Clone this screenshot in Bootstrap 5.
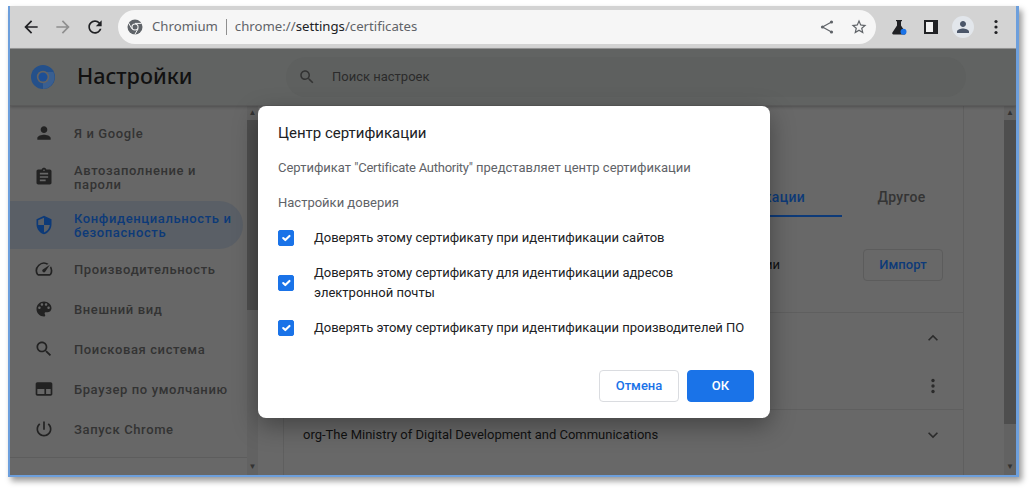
<!DOCTYPE html>
<html lang="ru">
<head>
<meta charset="utf-8">
<title>Настройки</title>
<link href="https://cdn.jsdelivr.net/npm/bootstrap@5.3.0/dist/css/bootstrap.min.css" rel="stylesheet">
<style>
html,body{height:100%;margin:0;background:#fff;overflow:hidden;font-family:Roboto,sans-serif;font-size:13px}
.shot-win{position:relative;margin:6px 0 0 8px;width:1011px;height:471px;border-left:2px solid #6d9fdc;border-right:3px solid #6d9fdc;border-bottom:2px solid #6d9fdc;box-shadow:3px 4px 6px rgba(0,0,0,.4);overflow:hidden;background:#686868}
.tool-bar{height:43px;background:#d3d3d3;border-bottom:1px solid #9a9a9a;padding:0 0 0 5px}
.tool-btn{width:32px;height:32px;flex:none}
.tool-btn svg{width:20px;height:20px}
.tool-last{margin-left:1px}
.omni-box{width:758px;height:34px;margin:0 7px 0 7px;background:#f6f6f6;border-radius:17px;padding:0 8px 0 9px;font-family:"Noto Sans",sans-serif;font-size:13.2px;color:#5f6368;flex:none;white-space:nowrap}
.omni-logo{margin-right:9px;flex:none}
.omni-sep{width:1px;height:16px;background:#8f8f8f;margin:0 8px}
.omni-host{color:#202124}
.omni-share{margin-right:3px}
.ava-tar{width:22px;height:22px;border-radius:50%;background:#e2e6eb}
.tool-btn .ava-tar svg{width:18px;height:18px}
.set-head{height:57px;background:#616362;border-bottom:1px solid #5a5a5a;box-shadow:0 1px 3px rgba(0,0,0,.25);position:relative;z-index:1}
.set-title{width:247px;padding-left:21px;font-family:"Noto Sans",sans-serif;font-size:21.6px;line-height:28px;font-weight:500;color:#111;flex:none;gap:22px}
.set-title span{margin-top:-2px}
.set-search{width:680px;height:40px;margin-left:29px;border-radius:20px;background:#5e605f;padding-left:12px;color:#2b2b2b;font-size:13px;gap:16px}
.set-body{height:370px}
.side-nav{width:237px;flex:none;padding-top:7px;background:#676767;height:352px;border-bottom:1px solid #5d5d5d}
.side-row{height:40px;color:#333;font-weight:500;font-size:13px;line-height:14px;padding-left:24px;gap:20px;letter-spacing:.62px}
.side-row span{padding-top:2px}
.side-row svg{width:20px;height:20px;fill:#222;flex:none}
.side-tall{height:48px}
.side-on{background:#5a5f66;border-radius:0 24px 24px 0;color:#0d3a78;width:233px}
.side-on svg{fill:#0d3a78}
.bar-y{width:12px;flex:none;background:#626262}
.bar-thin{width:11px}
.bar-cap{height:14px;color:#333;font-size:8px;line-height:14px;text-align:center}
.bar-cap-low{height:16px}
.bar-gap{flex:1 1 auto}
.bar-thumb{background:#4e4e4e}
.sc-left{height:190px}
.sc-right{height:304px}
.main-pane{flex:1 1 auto;padding:0 40px 0 25px;min-width:0}
.cert-card{height:100%;border-left:1px solid #5f5f5f;border-right:1px solid #5f5f5f}
.tab-bar{height:111px;padding-top:72px}
.tab-item{font-weight:500;text-align:center;height:39px;padding:10px 2px 0 0;color:#343434;font-size:14px;line-height:18px;width:121px;letter-spacing:.3px}
.tab-on{width:204px;color:#0d3a78;border-bottom:2px solid #0d3a78;text-align:right;padding-right:37px}
.imp-row{height:96px;border-bottom:1px solid #5f5f5f;padding:0 20px 0 19px;color:#111}
.imp-text{flex:1 1 auto;text-align:right;padding-right:83px}
.imp-btn{width:80px;height:32px;padding:0;border:1px solid #5c5c5c;border-radius:4px;background:transparent;color:#0d3a78;font-weight:500;font-size:13px;letter-spacing:.1px}
.org-row{padding:0 20px 0 19px;color:#111}
.org-a{height:49px}.org-b{height:48px;border-bottom:1px solid #5f5f5f}.org-c{height:49px;padding-top:1px}
.org-row svg{width:20px;height:20px;fill:#2b2b2b}
.dlg-box{position:absolute;left:248px;top:100px;width:512px;height:312px;background:#fff;border-radius:8px;box-shadow:0 8px 24px rgba(0,0,0,.35);padding:20px 16px 16px 20px;z-index:5;color:#202124}
.dlg-title{font-size:15px;line-height:14px;margin:0 0 20px;font-weight:400}
.dlg-note{color:#5f6368;line-height:15px;margin:0 0 20px}
.dlg-tight{letter-spacing:-.25px}
.dlg-check{gap:20px;line-height:20px;margin:0}
.dlg-check .form-check-input{width:16px;height:16px;margin:0;flex:none;background-color:#1a73e8;border-color:#1a73e8;border-radius:2px}
.dlg-list{gap:15px;margin-top:-2px}
.dlg-foot{position:absolute;right:16px;bottom:16px;gap:8px}
.dlg-cancel{width:80px;height:32px;padding:0;font-size:13px;font-weight:500;border:1px solid #dadce0;color:#1a73e8;background:#fff;border-radius:4px}
.dlg-ok{width:67px;height:32px;padding:0;font-size:13px;font-weight:500;background:#1a73e8;border:1px solid #1a73e8;color:#fff;border-radius:4px}
</style>
</head>
<body>
<div class="shot-win">
  <div class="tool-bar d-flex align-items-center">
    <div class="tool-btn d-flex align-items-center justify-content-center"><svg viewBox="0 0 24 24" fill="#202124"><path d="M20 11H7.83l5.59-5.59L12 4l-8 8 8 8 1.41-1.41L7.83 13H20v-2z"/></svg></div>
    <div class="tool-btn d-flex align-items-center justify-content-center"><svg viewBox="0 0 24 24" fill="#8f8f8f"><path d="M12 4l-1.41 1.41L16.17 11H4v2h12.17l-5.58 5.59L12 20l8-8z"/></svg></div>
    <div class="tool-btn d-flex align-items-center justify-content-center"><svg viewBox="0 0 24 24" fill="#202124"><path d="M17.65 6.35C16.2 4.9 14.21 4 12 4c-4.42 0-7.99 3.58-7.99 8s3.57 8 7.99 8c3.73 0 6.84-2.55 7.73-6h-2.08c-.82 2.33-3.04 4-5.65 4-3.31 0-6-2.69-6-6s2.69-6 6-6c1.66 0 3.14.69 4.22 1.78L13 11h7V4l-2.35 2.35z"/></svg></div>
    <div class="omni-box d-flex align-items-center">
      <svg width="16" height="16" viewBox="0 0 16 16" class="omni-logo"><circle cx="8" cy="8" r="7.5" fill="#5f6368"/><circle cx="8" cy="8" r="3.6" fill="#f6f6f6"/><circle cx="8" cy="8" r="2.5" fill="#5f6368"/><path d="M8 4.4h6.6M4.9 9.8L1.6 4M11.1 9.8l-3.3 5.7" stroke="#f6f6f6" stroke-width="1"/></svg>
      <span>Chromium</span><span class="omni-sep"></span><span>chrome://<span class="omni-host">settings</span>/certificates</span>
      <span class="ms-auto d-flex align-items-center gap-3">
        <svg class="omni-share" width="14" height="16" viewBox="0 0 14 16" fill="#5f6368"><path d="M11.5 3L2.500 8l9 5" fill="none" stroke="#5f6368" stroke-width="1.200"/><circle cx="11.500" cy="3" r="1.600"/><circle cx="2.500" cy="8" r="1.600"/><circle cx="11.500" cy="13" r="1.600"/></svg>
        <svg width="18" height="18" viewBox="0 0 24 24" fill="#5f6368"><path d="M22 9.24l-7.19-.62L12 2 9.19 8.63 2 9.24l5.46 4.73L5.82 21 12 17.27 18.18 21l-1.63-7.03L22 9.24zM12 15.4l-3.76 2.27 1-4.28-3.32-2.88 4.38-.38L12 6.1l1.71 4.04 4.38.38-3.32 2.88 1 4.28L12 15.4z"/></svg>
      </span>
    </div>
    <div class="tool-btn d-flex align-items-center justify-content-center"><svg viewBox="0 0 20 20"><path d="M7 3h6v1.2h-1v4.2l4.6 7.2c.5.8 0 1.9-1 1.9H4.4c-1 0-1.500-1.100-1-1.900L8 8.400V4.200H7z" fill="#202124"/><circle cx="14.500" cy="14.800" r="3" fill="#1a73e8"/></svg></div>
    <div class="tool-btn d-flex align-items-center justify-content-center"><svg viewBox="0 0 20 20"><rect x="3" y="3" width="14" height="14" fill="#202124"/><rect x="5" y="5" width="7" height="10" fill="#f1f1f1"/></svg></div>
    <div class="tool-btn d-flex align-items-center justify-content-center"><div class="ava-tar d-flex align-items-center justify-content-center"><svg viewBox="0 0 24 24" fill="#4b5669"><path d="M12 12c2.210 0 4-1.790 4-4s-1.790-4-4-4-4 1.790-4 4 1.790 4 4 4zm0 2c-2.670 0-8 1.340-8 4v2h16v-2c0-2.660-5.330-4-8-4z"/></svg></div></div>
    <div class="tool-btn tool-last d-flex align-items-center justify-content-center"><svg viewBox="0 0 20 20" fill="#202124"><circle cx="10" cy="4.500" r="1.600"/><circle cx="10" cy="10" r="1.600"/><circle cx="10" cy="15.500" r="1.600"/></svg></div>
  </div>

  <div class="set-head d-flex align-items-center">
    <div class="set-title d-flex align-items-center">
      <svg width="24" height="24" viewBox="0 0 24 24" class="flex-none"><circle cx="12" cy="12" r="12" fill="#24508a"/><path d="M12 7h10.400A12 12 0 0 1 12 24z" fill="#3a5f90"/><circle cx="12" cy="12" r="6.200" fill="#636363"/><circle cx="12" cy="12" r="4.500" fill="#1d4f96"/></svg>
      <span>Настройки</span>
    </div>
    <div class="set-search d-flex align-items-center">
      <svg width="18" height="18" viewBox="0 0 24 24" fill="#333"><path d="M15.500 14h-.790l-.280-.270C15.410 12.590 16 11.110 16 9.500 16 5.910 13.090 3 9.500 3S3 5.910 3 9.500 5.910 16 9.500 16c1.610 0 3.090-.590 4.230-1.570l.270.280v.790l5 4.990L20.490 19l-4.990-5zm-6 0C7.010 14 5 11.990 5 9.500S7.010 5 9.500 5 14 7.010 14 9.500 11.990 14 9.500 14z"/></svg>
      <span>Поиск настроек</span>
    </div>
  </div>

  <div class="set-body d-flex">
    <nav class="side-nav">
      <div class="side-row d-flex align-items-center"><svg viewBox="0 0 24 24"><path d="M12 12c2.210 0 4-1.790 4-4s-1.790-4-4-4-4 1.790-4 4 1.790 4 4 4zm0 2c-2.670 0-8 1.340-8 4v2h16v-2c0-2.660-5.330-4-8-4z"/></svg><span>Я и Google</span></div>
      <div class="side-row side-tall d-flex align-items-center"><svg viewBox="0 0 24 24"><path d="M19 3h-4.180C14.400 1.840 13.300 1 12 1c-1.300 0-2.400.84-2.820 2H5c-1.100 0-2 .9-2 2v14c0 1.100.9 2 2 2h14c1.100 0 2-.9 2-2V5c0-1.100-.9-2-2-2zm-7 0c.55 0 1 .45 1 1s-.45 1-1 1-1-.45-1-1 .45-1 1-1zm2 14H7v-2h7v2zm3-4H7v-2h10v2zm0-4H7V7h10v2z"/></svg><span>Автозаполнение и<br>пароли</span></div>
      <div class="side-row side-tall side-on d-flex align-items-center"><svg viewBox="0 0 24 24"><path d="M12 1L3 5v6c0 5.550 3.840 10.740 9 12 5.160-1.260 9-6.450 9-12V5l-9-4zm0 10.990h7c-.53 4.120-3.280 7.790-7 8.940V12H5V6.300l7-3.110v8.800z"/></svg><span>Конфиденциальность и<br>безопасность</span></div>
      <div class="side-row d-flex align-items-center"><svg viewBox="0 0 24 24"><path d="M20.380 8.570l-1.230 1.850a8 8 0 0 1-.22 7.580H5.070A8 8 0 0 1 15.580 6.850l1.850-1.230A10 10 0 0 0 3.350 19a2 2 0 0 0 1.720 1h13.850a2 2 0 0 0 1.740-1 10 10 0 0 0-.27-10.440zm-9.790 6.840a2 2 0 0 0 2.830 0l5.660-8.490-8.490 5.660a2 2 0 0 0 0 2.830z"/></svg><span>Производительность</span></div>
      <div class="side-row d-flex align-items-center"><svg viewBox="0 0 24 24"><path d="M12 3c-4.970 0-9 4.030-9 9s4.030 9 9 9c.83 0 1.500-.67 1.500-1.500 0-.39-.15-.74-.39-1.010-.23-.26-.38-.61-.38-.99 0-.83.67-1.500 1.500-1.500H16c2.760 0 5-2.240 5-5 0-4.420-4.030-8-9-8zm-5.500 9c-.83 0-1.500-.67-1.500-1.500S5.670 9 6.500 9 8 9.670 8 10.500 7.330 12 6.500 12zm3-4C8.670 8 8 7.330 8 6.500S8.670 5 9.500 5s1.500.67 1.500 1.500S10.330 8 9.500 8zm5 0c-.83 0-1.500-.67-1.500-1.500S13.670 5 14.500 5s1.500.67 1.500 1.500S15.330 8 14.500 8zm3 4c-.83 0-1.500-.67-1.500-1.500S16.670 9 17.500 9s1.500.67 1.500 1.500-.67 1.500-1.500 1.500z"/></svg><span>Внешний вид</span></div>
      <div class="side-row d-flex align-items-center"><svg viewBox="0 0 24 24"><path d="M15.500 14h-.790l-.280-.270C15.410 12.590 16 11.110 16 9.500 16 5.910 13.090 3 9.500 3S3 5.910 3 9.500 5.910 16 9.500 16c1.610 0 3.090-.590 4.230-1.570l.270.280v.790l5 4.990L20.490 19l-4.990-5zm-6 0C7.010 14 5 11.990 5 9.500S7.010 5 9.500 5 14 7.010 14 9.500 11.990 14 9.500 14z"/></svg><span>Поисковая система</span></div>
      <div class="side-row d-flex align-items-center"><svg viewBox="0 0 24 24"><path d="M20 4H4c-1.100 0-2 .9-2 2v12c0 1.100.9 2 2 2h16c1.100 0 2-.9 2-2V6c0-1.100-.9-2-2-2zm0 14h-5.500v-6H20v6zm-7.500 0H4v-6h8.500v6z"/></svg><span>Браузер по умолчанию</span></div>
      <div class="side-row d-flex align-items-center"><svg viewBox="0 0 24 24"><path d="M13 3h-2v10h2V3zm4.830 2.170l-1.420 1.420C17.990 7.860 19 9.810 19 12c0 3.870-3.130 7-7 7s-7-3.130-7-7c0-2.190 1.010-4.140 2.580-5.420L6.170 5.170C4.230 6.820 3 9.260 3 12c0 4.970 4.030 9 9 9s9-4.030 9-9c0-2.740-1.230-5.180-3.170-6.830z"/></svg><span>Запуск Chrome</span></div>
    </nav>
    <div class="bar-y bar-thin d-flex flex-column">
      <div class="bar-cap">▲</div><div class="bar-thumb sc-left"></div><div class="bar-gap"></div><div class="bar-cap bar-cap-low">▼</div>
    </div>
    <main class="main-pane">
      <div class="cert-card">
        <div class="tab-bar d-flex justify-content-end">
          <div class="tab-item tab-on">сертификации</div>
          <div class="tab-item">Другое</div>
        </div>
        <div class="imp-row d-flex align-items-center">
          <div class="imp-text">сертификации</div>
          <button type="button" class="btn imp-btn">Импорт</button>
        </div>
        <div class="org-row org-a d-flex align-items-center justify-content-end"><svg viewBox="0 0 24 24"><path d="M12 8l-6 6 1.410 1.410L12 10.830l4.590 4.580L18 14z"/></svg></div>
        <div class="org-row org-b d-flex align-items-center justify-content-end"><svg viewBox="0 0 20 20"><circle cx="10" cy="4.500" r="1.700"/><circle cx="10" cy="10" r="1.700"/><circle cx="10" cy="15.500" r="1.700"/></svg></div>
        <div class="org-row org-c d-flex align-items-center justify-content-between"><span>org-The Ministry of Digital Development and Communications</span><svg viewBox="0 0 24 24"><path d="M16.590 8.590L12 13.170 7.410 8.590 6 10l6 6 6-6z"/></svg></div>
      </div>
    </main>
    <div class="bar-y d-flex flex-column">
      <div class="bar-cap">▲</div><div class="bar-thumb sc-right"></div><div class="bar-gap"></div><div class="bar-cap bar-cap-low">▼</div>
    </div>
  </div>

  <div class="dlg-box">
    <h2 class="dlg-title">Центр сертификации</h2>
    <p class="dlg-note">Сертификат <span class="dlg-tight">"Certificate Authority"</span> представляет центр сертификации</p>
    <p class="dlg-note">Настройки доверия</p>
    <div class="dlg-list d-flex flex-column">
      <label class="dlg-check d-flex align-items-center"><input class="form-check-input" type="checkbox" checked><span>Доверять этому сертификату при идентификации сайтов</span></label>
      <label class="dlg-check d-flex align-items-center"><input class="form-check-input" type="checkbox" checked><span>Доверять этому сертификату для идентификации адресов<br>электронной почты</span></label>
      <label class="dlg-check d-flex align-items-center"><input class="form-check-input" type="checkbox" checked><span>Доверять этому сертификату при идентификации производителей ПО</span></label>
    </div>
    <div class="dlg-foot d-flex">
      <button type="button" class="btn dlg-cancel">Отмена</button>
      <button type="button" class="btn dlg-ok">ОК</button>
    </div>
  </div>
</div>
<script src="https://cdn.jsdelivr.net/npm/bootstrap@5.3.0/dist/js/bootstrap.bundle.min.js"></script>
</body>
</html>
